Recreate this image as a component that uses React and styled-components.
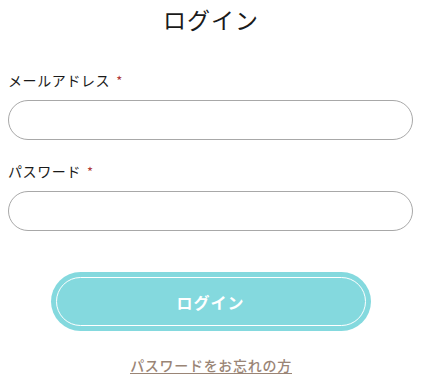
import React from "react";
import styled, { createGlobalStyle } from "styled-components";

const Global = createGlobalStyle`
  html, body { margin: 0; padding: 0; background: #fff; }
  body { font-family: "Noto Sans CJK JP", "Noto Sans", sans-serif; color: #222; }
`;

const Page = styled.div`
  padding: 5px 8px 0 8px;
  display: flex;
  flex-direction: column;
`;

const Title = styled.h1`
  margin: 0;
  text-align: center;
  font-size: 23px;
  font-weight: 400;
  letter-spacing: 1px;
  line-height: 28px;
  color: #1a1a1a;
`;

const Form = styled.form`
  margin-top: 37px;
  display: flex;
  flex-direction: column;
`;

const Field = styled.div`
  display: flex;
  flex-direction: column;
  gap: 9px;
  margin-bottom: ${(p) => p.$mb}px;
`;

const Label = styled.label`
  font-size: 14px;
  line-height: 20px;
  letter-spacing: 0.6px;
  color: #1a1a1a;
  display: flex;
  align-items: flex-start;
  gap: 6px;
`;

const Req = styled.span`
  color: #b03a3a;
  font-size: 13px;
  line-height: 20px;
  margin-top: 1px;
`;

const Input = styled.input`
  box-sizing: border-box;
  width: 405px;
  height: 40px;
  border: 1px solid #a8a8a8;
  border-radius: 20px;
  background: #fff;
  outline: none;
  padding: 0 16px;
`;

const ButtonWrap = styled.div`
  display: flex;
  justify-content: center;
  margin-top: 41px;
  padding-right: 1px;
`;

const Button = styled.button`
  box-sizing: border-box;
  width: 320px;
  height: 59px;
  border: none;
  border-radius: 30px;
  background: #84d9de;
  padding: 5px;
  cursor: pointer;
`;

const ButtonInner = styled.span`
  box-sizing: border-box;
  display: flex;
  align-items: center;
  justify-content: center;
  height: 100%;
  border: 1.5px solid #fff;
  border-radius: 25px;
  color: #fff;
  font-family: "Noto Sans CJK JP", sans-serif;
  font-size: 16px;
  font-weight: 700;
  letter-spacing: 1px;
`;

const LinkRow = styled.div`
  display: flex;
  justify-content: center;
  margin-top: 27px;
`;

const Link = styled.a`
  display: inline-block;
  font-size: 14px;
  font-weight: 500;
  line-height: 14px;
  padding-bottom: 1px;
  letter-spacing: 0.7px;
  color: #9a8576;
  text-decoration: none;
  border-bottom: 1px solid #9a8576;
`;

export default function App() {
  return (
    <>
      <Global />
      <Page>
        <Title>ログイン</Title>
        <Form onSubmit={(e) => e.preventDefault()}>
          <Field $mb={21}>
            <Label>
              メールアドレス<Req>*</Req>
            </Label>
            <Input type="email" />
          </Field>
          <Field $mb={0}>
            <Label>
              パスワード<Req>*</Req>
            </Label>
            <Input type="password" />
          </Field>
          <ButtonWrap>
            <Button type="submit">
              <ButtonInner>ログイン</ButtonInner>
            </Button>
          </ButtonWrap>
          <LinkRow>
            <Link href="#">パスワードをお忘れの方</Link>
          </LinkRow>
        </Form>
      </Page>
    </>
  );
}
